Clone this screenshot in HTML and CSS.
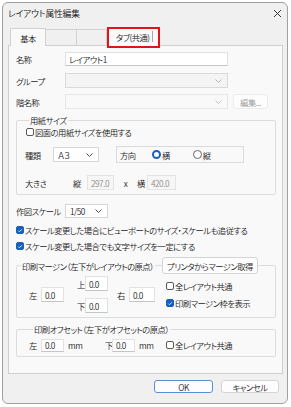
FILE: index.html
```html
<!DOCTYPE html>
<html lang="ja">
<head>
<meta charset="utf-8">
<link rel="stylesheet" href="styles.css">
</head>
<body>
<div class="window">
  <div class="titlebar">
    <span class="title">レイアウト属性編集</span>
    <svg class="close" width="9" height="9" viewBox="0 0 9 9"><path d="M1 1L8 8M8 1L1 8" stroke="#333" stroke-width="1"/></svg>
  </div>
  <div class="content">
    <div class="tabs">
      <div class="tab active">基本</div>
      <div class="tab blank1"></div>
      <div class="tab blank2"></div>
      <div class="tab marked"><span class="mtext">タブ(共通)</span><span class="mline"></span></div>
    </div>
    <div class="panel">
      <div class="row r1">
        <span class="lbl">名称</span>
        <div class="input w-name">レイアウト1</div>
      </div>
      <div class="row r2">
        <span class="lbl">グループ</span>
        <div class="select disabled w-name"><span></span><svg class="chev" width="7" height="4" viewBox="0 0 7 4"><path d="M0.5 0.5L3.5 3.5L6.5 0.5" fill="none" stroke="#b5b5b5"/></svg></div>
      </div>
      <div class="row r3">
        <span class="lbl">階名称</span>
        <div class="select disabled light w-name"><span></span><svg class="chev" width="7" height="4" viewBox="0 0 7 4"><path d="M0.5 0.5L3.5 3.5L6.5 0.5" fill="none" stroke="#c5c5c5"/></svg></div>
        <div class="btn edit">編集...</div>
      </div>

      <div class="group g1">
        <div class="gtitle"><span class="gt">用紙サイズ</span></div>
        <div class="cbrow c-paper"><span class="cb"></span><span>図面の用紙サイズを使用する</span></div>
        <div class="row kind">
          <span class="lbl2">種類</span>
          <div class="select w-a3"><span>Ａ３</span><svg class="chev" width="7" height="4" viewBox="0 0 7 4"><path d="M0.5 0.5L3.5 3.5L6.5 0.5" fill="none" stroke="#555"/></svg></div>
          <div class="dirbox">
            <span class="dirlbl">方向</span>
            <span class="radio on"></span><span class="rtext">横</span>
            <span class="radio off"></span><span class="rtext">縦</span>
          </div>
        </div>
        <div class="row size">
          <span class="lbl3">大きさ</span>
          <span class="sl">縦</span>
          <div class="input dis w-h">297.0</div>
          <span class="x">x</span>
          <span class="sl2">横</span>
          <div class="input dis w-w">420.0</div>
        </div>
      </div>

      <div class="row scale">
        <span class="lbl">作図スケール</span>
        <div class="select w-scale"><span>1/50</span><svg class="chev" width="7" height="4" viewBox="0 0 7 4"><path d="M0.5 0.5L3.5 3.5L6.5 0.5" fill="none" stroke="#555"/></svg></div>
      </div>
      <div class="cbrow c1"><span class="cb checked"><svg width="7" height="7" viewBox="0 0 7 7"><path d="M1.5 3.6L2.9 5L5.6 2" fill="none" stroke="#fff" stroke-width="0.9"/></svg></span><span>スケール変更した場合にビューポートのサイズ・スケールも追従する</span></div>
      <div class="cbrow c2"><span class="cb checked"><svg width="7" height="7" viewBox="0 0 7 7"><path d="M1.5 3.6L2.9 5L5.6 2" fill="none" stroke="#fff" stroke-width="0.9"/></svg></span><span>スケール変更した場合でも文字サイズを一定にする</span></div>

      <div class="group g2">
        <div class="gtitle2">
          <span class="gt">印刷マージン（左下がレイアウトの原点）</span>
          <div class="btn getm">プリンタからマージン取得</div>
        </div>
        <div class="margins">
          <div class="mcol">
            <span class="ml">左</span><div class="input w-m">0.0</div>
          </div>
          <div class="mstack">
            <div class="mcol"><span class="ml2">上</span><div class="input w-m">0.0</div></div>
            <div class="mcol"><span class="ml2">下</span><div class="input w-m">0.0</div></div>
          </div>
          <div class="mcol right">
            <span class="ml">右</span><div class="input w-m2">0.0</div>
          </div>
          <div class="cbstack">
            <div class="cbrow"><span class="cb"></span><span>全レイアウト共通</span></div>
            <div class="cbrow"><span class="cb checked"><svg width="7" height="7" viewBox="0 0 7 7"><path d="M1.5 3.6L2.9 5L5.6 2" fill="none" stroke="#fff" stroke-width="0.9"/></svg></span><span>印刷マージン枠を表示</span></div>
          </div>
        </div>
      </div>

      <div class="group g3">
        <div class="gtitle"><span class="gt">印刷オフセット（左下がオフセットの原点）</span></div>
        <div class="offsets">
          <span class="ml">左</span><div class="input w-m">0.0</div><span class="mm">mm</span>
          <span class="ml off2">下</span><div class="input w-m">0.0</div><span class="mm mm2">mm</span>
          <div class="cbrow"><span class="cb"></span><span>全レイアウト共通</span></div>
        </div>
      </div>
    </div>
    <div class="buttons">
      <div class="btn ok">OK</div>
      <div class="btn cancel">キャンセル</div>
    </div>
  </div>
</div>
</body>
</html>
```
FILE: styles.css
```css
* { box-sizing: border-box; }
body {
  margin: 0;
  background: #ffffff;
  font-family: "Noto Sans CJK JP", "Noto Sans", sans-serif;
  font-size: 8.3px;
  font-weight: 350;
  letter-spacing: -0.5px;
  font-feature-settings: "palt";
  color: #1a1a1a;
}
.window {
  margin: 2px 0 0 2px;
  width: 286px;
  height: 402px;
  border: 1px solid #a0a0a0;
  border-radius: 6px;
  background: #f0f0f0;
  display: flex;
  flex-direction: column;
}
.titlebar {
  height: 20px;
  display: flex;
  align-items: center;
  justify-content: space-between;
  padding: 0 5px 0 5px;
  font-size: 8.8px;
  letter-spacing: -0.2px;
}
.close { margin-top: 1px; }
.content { padding: 0 4px 0 5px; }
.tabs {
  margin-top: 4px;
  height: 18px;
  display: flex;
  align-items: flex-end;
  padding-left: 2px;
}
.tab {
  height: 16px;
  border: 1px solid #d2d2d2;
  border-bottom: none;
  display: flex;
  align-items: center;
  justify-content: center;
  margin-left: -1px;
}
.tab.active { height: 18px; width: 36px; background: #f9f9f9; margin-left: 0; position: relative; z-index: 1; margin-bottom: -1px; }
.tab.blank1 { width: 32px; }
.tab.blank2 { width: 31px; }
.tab.marked {
  width: 53px;
  height: 21px;
  margin-left: 0;
  margin-bottom: -3px;
  border: 2px solid #e3121b;
  background: #fbfbfb;
  position: relative;
  z-index: 2;
  justify-content: flex-start;
  padding: 0 0 2px 7px;
}
.mline { width: 1px; height: 11px; background: #a8a8a8; margin-left: 2px; }
.panel {
  height: 329px;
  border: 1px solid #cfcfcf;
  background: #f9f9f9;
  padding: 6px 6px 0 7px;
}
.row { display: flex; align-items: center; }
.r1 { height: 14px; }
.r2 { height: 15px; margin-top: 7px; }
.r3 { height: 15px; margin-top: 6px; }
.lbl { width: 49px; }
.input {
  height: 15px;
  background: #fff;
  border: 1px solid #e2e2e2;
  border-bottom-color: #c4c4c4;
  display: flex;
  align-items: center;
  padding-left: 3px;
}
.r1 .input { height: 14px; }
.w-name { width: 163px; }
.select {
  height: 15px;
  background: #fff;
  border: 1px solid #d6d6d6;
  display: flex;
  align-items: center;
  justify-content: space-between;
  padding: 0 5px 0 4px;
}
.select.disabled { background: #f4f4f4; border-color: #d9d9d9; }
.select.light { background: #f9f9f9; border-color: #e6e6e6; }
.btn {
  display: flex;
  align-items: center;
  justify-content: center;
  background: #fdfdfd;
  border: 1px solid #d4d4d4;
  border-radius: 3px;
}
.edit { margin-left: 5px; width: 35px; height: 15px; color: #9a9a9a; border-color: #ebebeb; }

.group {
  border: 1px solid #dcdcdc;
  border-radius: 2px;
}
.gtitle { height: 12px; margin-top: -7px; display: flex; }
.gt { background: #f9f9f9; padding: 0 1px; margin-left: 4px; line-height: 12px; }
.g1 { margin-top: 11px; padding: 0 0 4px 8px; }
.cbrow { display: flex; align-items: center; height: 12px; }
.cb {
  width: 8px; height: 8px;
  border: 1px solid #5a5a5a;
  border-radius: 2px;
  background: #fff;
  margin-right: 1px;
  display: inline-flex;
  align-items: center;
  justify-content: center;
}
.cb.checked { background: #1760be; border-color: #1760be; }
.c-paper { margin-left: 1px; }
.kind { margin-top: 8px; height: 17px; }
.lbl2 { width: 28px; }
.w-a3 { width: 46px; }
.dirbox {
  margin-left: 17px;
  width: 128px;
  height: 17px;
  border: 1px solid #dadada;
  display: flex;
  align-items: center;
  padding-left: 3px;
}
.dirlbl { width: 32px; }
.radio {
  width: 9px; height: 9px;
  border-radius: 50%;
  display: inline-block;
}
.radio.on { border: 2.5px solid #1760be; background: #fff; }
.radio.off { border: 1px solid #666; background: #fff; margin-left: 23px; }
.rtext { margin-left: 1px; }
.size { margin-top: 12px; height: 15px; }
.lbl3 { width: 48px; }
.sl { width: 14px; }
.w-h { width: 27px; }
.dis { background: #f6f6f6; color: #8e8e8e; border-color: #e4e4e4; }
.x { width: 23px; text-align: center; }
.sl2 { width: 10px; }
.w-w { width: 29px; }

.scale { margin-top: 9px; height: 14px; }
.w-scale { width: 43px; height: 14px; }
.c1 { margin-top: 6px; }
.c2 { margin-top: 4px; }

.g2 { margin-top: 13px; padding: 0 0 4px 12px; }
.gtitle2 { height: 17px; margin-top: -9px; margin-left: -12px; display: flex; align-items: center; }
.getm { margin-left: auto; margin-right: 17px; width: 96px; height: 17px; }
.margins { display: flex; align-items: center; margin-top: 2px; }
.mcol { display: flex; align-items: center; }
.ml { width: 12px; }
.ml2 { width: 8px; }
.w-m { width: 23px; height: 15px; }
.w-m2 { width: 26px; height: 15px; }
.mstack { display: flex; flex-direction: column; gap: 7px; margin-left: 13px; }
.right { margin-left: 9px; }
.cbstack { display: flex; flex-direction: column; gap: 5px; margin-left: 11px; }

.g3 { margin-top: 11px; padding: 0 0 4px 12px; }
.offsets { display: flex; align-items: center; margin-top: 3px; height: 14px; }
.offsets .input { height: 13px; }
.mm { margin-left: 4px; width: 37px; }
.mm2 { width: 27px; }
.off2 { width: 7px; }

.buttons {
  display: flex;
  justify-content: flex-end;
  gap: 8px;
  margin-top: 6px;
  padding-right: 4px;
}
.ok { width: 59px; height: 13px; border: 1px solid #5a8fd6; }
.cancel { width: 58px; height: 13px; }
```
